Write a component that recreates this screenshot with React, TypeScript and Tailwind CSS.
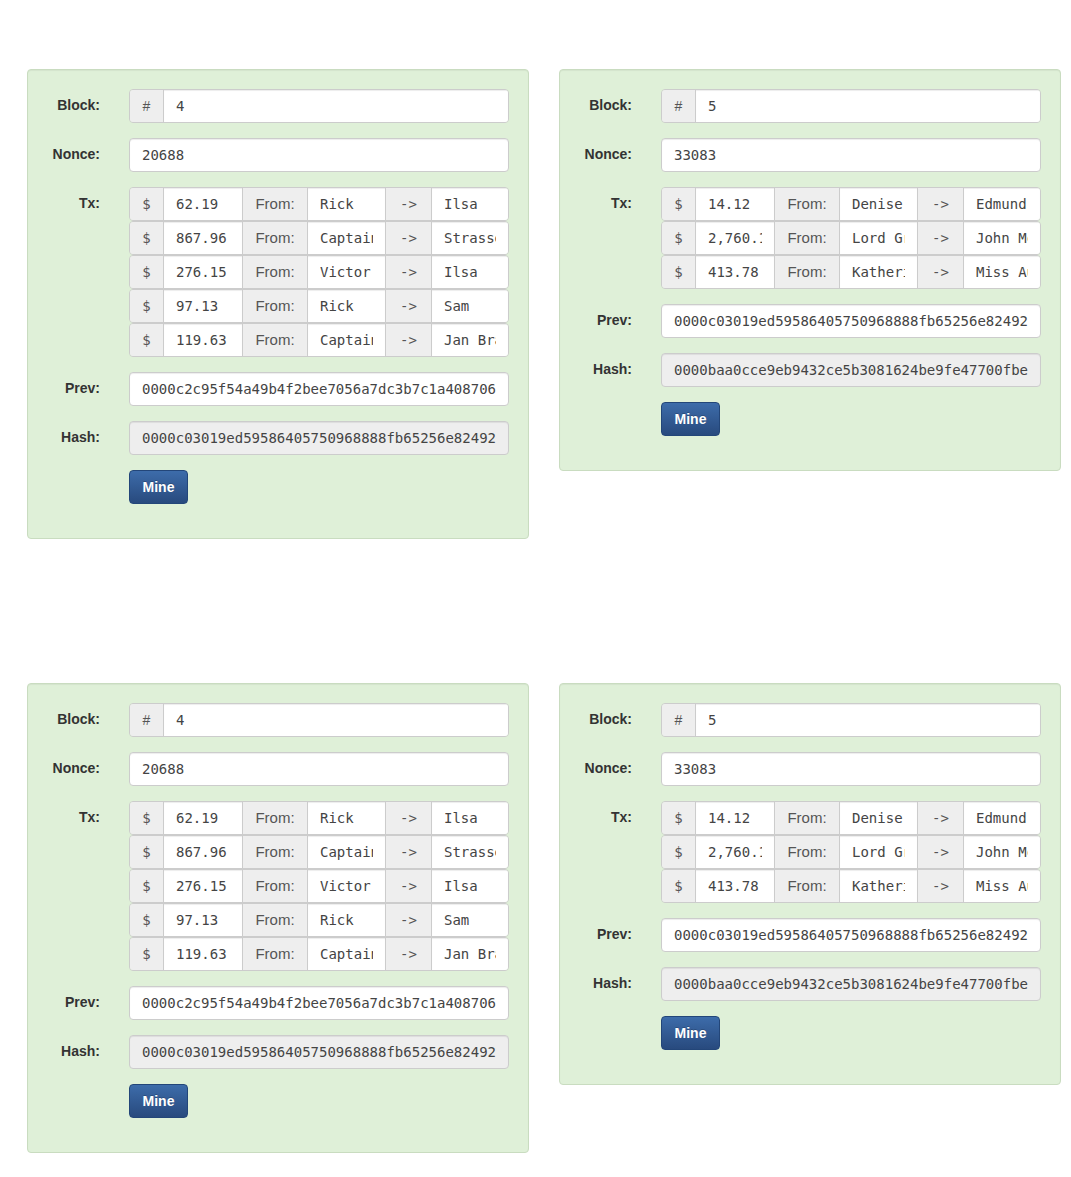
import React from 'react';

type Tx = { amount: string; from: string; to: string };

type BlockData = {
  block: string;
  nonce: string;
  txs: Tx[];
  prev: string;
  hash: string;
};

const blocks: BlockData[] = [
  {
    block: '4',
    nonce: '20688',
    txs: [
      { amount: '62.19', from: 'Rick', to: 'Ilsa' },
      { amount: '867.96', from: 'Captain Renault', to: 'Strasser' },
      { amount: '276.15', from: 'Victor', to: 'Ilsa' },
      { amount: '97.13', from: 'Rick', to: 'Sam' },
      { amount: '119.63', from: 'Captain Renault', to: 'Jan Brandel' },
    ],
    prev: '0000c2c95f54a49b4f2bee7056a7dc3b7c1a408706f5e2b1c3d9a07e4f11b2c8',
    hash: '0000c03019ed59586405750968888fb65256e82492a6f1b0d3c7e5a9b8f2d4c1',
  },
  {
    block: '5',
    nonce: '33083',
    txs: [
      { amount: '14.12', from: 'Denise', to: 'Edmund' },
      { amount: '2,760.18', from: 'Lord Grantham', to: 'John McCoy' },
      { amount: '413.78', from: 'Katherine', to: 'Miss Audrey' },
    ],
    prev: '0000c03019ed59586405750968888fb65256e82492a6f1b0d3c7e5a9b8f2d4c1',
    hash: '0000baa0cce9eb9432ce5b3081624be9fe47700fbe19a3c4d5e6f708192a3b4c',
  },
];

const mono = "font-['DejaVu_Sans_Mono',monospace]";
const sans = "font-['Liberation_Sans',Arial,sans-serif]";

const inputBase =
  'h-[34px] w-full min-w-0 rounded border border-[#ccc] px-3 text-[14px] text-[#444] outline-none shadow-[inset_0_1px_1px_rgba(0,0,0,0.075)] ' +
  mono;

const Label = ({ children, top }: { children: React.ReactNode; top?: boolean }) => (
  <div
    className={`text-right text-[14px] font-bold text-[#333] leading-5 pt-[6px] ${sans} ${top ? 'self-start' : ''}`}
  >
    {children}
  </div>
);

const Addon = ({ children, className }: { children: React.ReactNode; className: string }) => (
  <div
    className={`flex h-full shrink-0 items-center justify-center bg-[#eee] text-[#555] ${className}`}
  >
    {children}
  </div>
);

const CellInput = ({ value, className }: { value: string; className: string }) => (
  <input
    readOnly
    value={value}
    className={`h-full min-w-0 bg-white px-3 text-[14px] text-[#444] outline-none border-l border-[#ccc] shadow-[inset_0_1px_1px_rgba(0,0,0,0.075)] ${mono} ${className}`}
  />
);

const Block: React.FC<{ data: BlockData }> = ({ data }) => (
  <div className="w-[502px] shrink-0 rounded border border-[#c9dcc0] bg-[#dff0d8] px-[19px] pt-[19px] pb-[34px] shadow-[inset_0_1px_1px_rgba(0,0,0,0.05)]">
    <div className="grid grid-cols-[53px_minmax(0,1fr)] gap-x-[29px] gap-y-[15px]">
      <Label>Block:</Label>
      <div className="flex h-[34px] min-w-0 overflow-hidden rounded border border-[#ccc]">
        <Addon className={`w-[33px] text-[14px] ${sans}`}>#</Addon>
        <CellInput value={data.block} className="w-0 flex-1" />
      </div>

      <Label>Nonce:</Label>
      <input readOnly value={data.nonce} className={`${inputBase} bg-white`} />

      <Label top>Tx:</Label>
      <div className="flex min-w-0 flex-col">
        {data.txs.map((tx, i) => (
          <div key={i} className="flex h-[34px] min-w-0 overflow-hidden rounded border border-[#ccc]">
            <Addon className={`w-[33px] text-[14px] ${mono}`}>$</Addon>
            <CellInput value={tx.amount} className="w-[79px] shrink-0" />
            <Addon className={`w-[65px] border-l border-[#ccc] text-[15px] ${sans}`}>From:</Addon>
            <CellInput value={tx.from} className="w-[78px] shrink-0" />
            <Addon className={`w-[46px] border-l border-[#ccc] text-[14px] ${mono}`}>-&gt;</Addon>
            <CellInput value={tx.to} className="w-0 flex-1" />
          </div>
        ))}
      </div>

      <Label>Prev:</Label>
      <input readOnly value={data.prev} className={`${inputBase} bg-white`} />

      <Label>Hash:</Label>
      <input readOnly value={data.hash} className={`${inputBase} bg-[#eee]`} />

      <div />
      <div>
        <button
          className={`h-[34px] w-[59px] rounded border border-[#234679] bg-gradient-to-b from-[#3d6caa] to-[#284a7e] text-[14px] font-bold text-white [text-shadow:0_-1px_0_rgba(0,0,0,0.2)] ${sans}`}
        >
          Mine
        </button>
      </div>
    </div>
  </div>
);

export default function App() {
  return (
    <div className="min-h-[1177px] w-[1071px] bg-white pt-[69px] pl-[27px]">
      <div className="flex flex-col gap-y-[144px]">
        {[0, 1].map((row) => (
          <div key={row} className="flex items-start gap-x-[30px]">
            {blocks.map((b, i) => (
              <Block key={i} data={b} />
            ))}
          </div>
        ))}
      </div>
    </div>
  );
}
